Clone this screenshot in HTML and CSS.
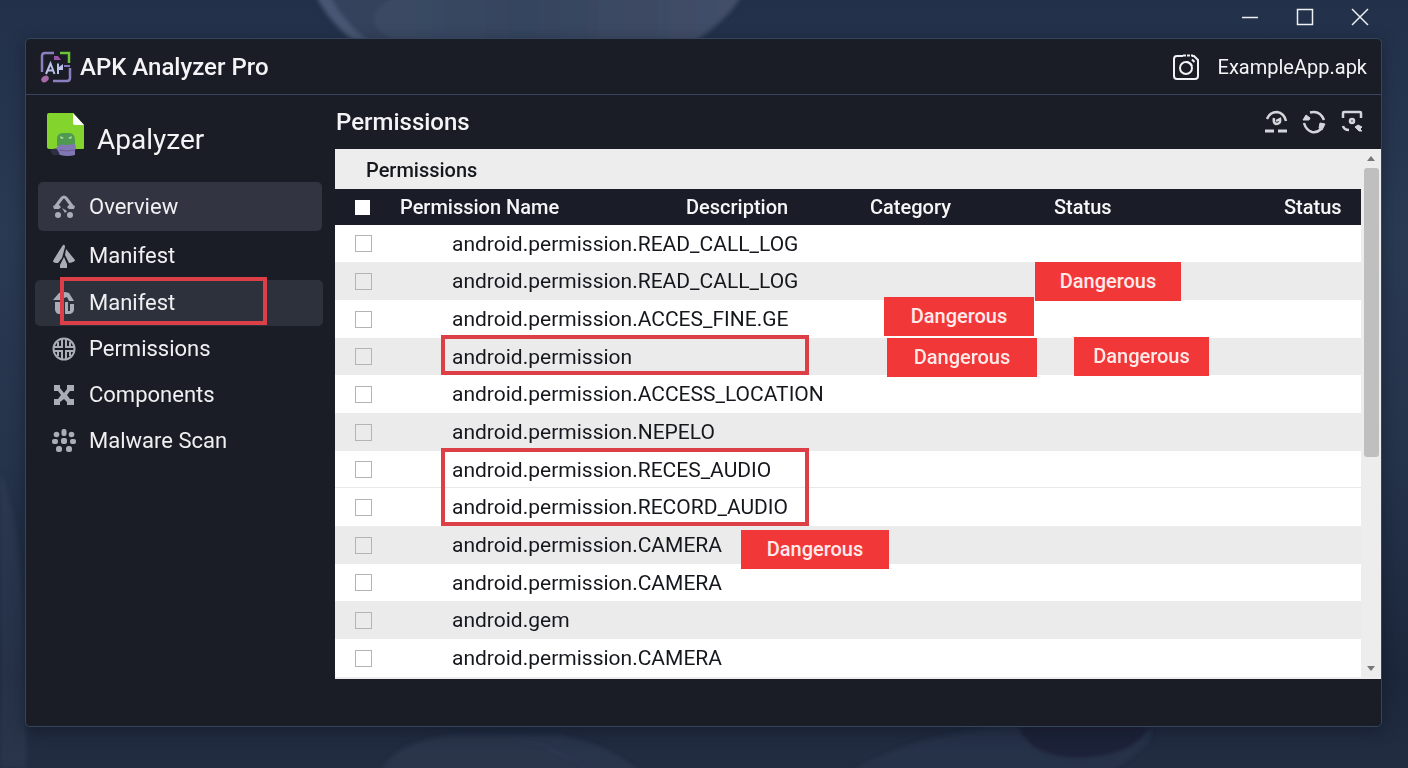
FILE: index.html
```
<!DOCTYPE html>
<html lang="en">
<head>
<meta charset="utf-8">
<meta name="viewport" content="width=device-width, initial-scale=1">
<title>APK Analyzer Pro</title>
<link rel="stylesheet" href="styles.css">
</head>
<body class="desktop">
<svg class="wallpaper" viewBox="0 0 1408 768" preserveAspectRatio="none" aria-hidden="true">
  <defs>
    <linearGradient id="base" x1="0" y1="0" x2="0" y2="1">
      <stop offset="0" stop-color="#22304a"/><stop offset="0.3" stop-color="#2a3a52"/>
      <stop offset="0.6" stop-color="#25334b"/><stop offset="0.88" stop-color="#1c273b"/><stop offset="1" stop-color="#232d42"/>
    </linearGradient>
    <linearGradient id="petal" x1="0" y1="0" x2="1" y2="0">
      <stop offset="0" stop-color="#3d4c67"/><stop offset="0.5" stop-color="#36445e"/><stop offset="1" stop-color="#434f69"/>
    </linearGradient>
    <filter id="soft"><feGaussianBlur stdDeviation="2"/></filter>
  </defs>
  <rect width="1408" height="768" fill="url(#base)"/>
  <path d="M0 470Q30 540 26 768H0Z" fill="#34425a" opacity=".4" filter="url(#soft)"/>
  <g filter="url(#soft)">
    <path d="M316 -4Q330 24 358 44H690Q724 24 742 -4Z" fill="url(#petal)"/>
    <path d="M316 -4Q330 24 358 44H372Q340 20 330 -4Z" fill="#5a6a86" opacity=".4"/>
    <path d="M330 -4Q350 30 372 44H400Q350 20 395 -4Z" fill="#2b3850" opacity=".4"/>
    <path d="M380 772Q400 735 470 735Q550 735 590 772Z" fill="#303c54" opacity=".5"/>
    <path d="M590 772Q540 740 490 735H560Q610 745 640 772Z" fill="#3a4760" opacity=".3"/>
    <path d="M850 772Q910 735 1000 728H1150Q1160 740 1110 772Z" fill="#2b3850" opacity=".5"/>
    <path d="M1018 726Q1030 758 1080 758Q1135 756 1150 726Z" fill="#1a2439"/>
  </g>
</svg>

<div class="caption-bar">
  <button class="caption-btn" aria-label="Minimize"><svg viewBox="0 0 18 18"><path d="M1 9.500H17"/></svg></button>
  <button class="caption-btn" aria-label="Maximize"><svg viewBox="0 0 18 18"><rect x="1.500" y="1.500" width="15" height="15"/></svg></button>
  <button class="caption-btn" aria-label="Close"><svg viewBox="0 0 18 18"><path d="M1 1L17 17M17 1L1 17"/></svg></button>
</div>

<div class="window">
  <header class="app-header">
    <svg class="app-logo" viewBox="0 0 32 32" fill="none" stroke-width="2.500" aria-hidden="true">
      <path d="M2 21V5Q2 2 5 2H14" stroke="#8c7fc0"/>
      <path d="M14 5V9H21L18 5Z" fill="#9a55a8"/>
      <path d="M20 2H29V12" stroke="#6cc43a"/>
      <path d="M30 17V27Q30 30 27 30H13" stroke="#8c7fc0"/>
      <path d="M24 15H30" stroke="#7f78bd" stroke-width="2"/>
      <ellipse cx="5" cy="28" rx="4" ry="3" transform="rotate(-35 5 28)" fill="#a86aa6"/>
      <path d="M6 23L10.500 12.500L14.500 23M8 19.500H13.500M18 23V12.500M18 18L22 15V18H19" stroke="#bdc0e8" stroke-width="2"/>
    </svg>
    <h1 class="app-title">APK Analyzer Pro</h1>
    <div class="open-file">
      <svg class="file-icon" viewBox="0 0 28 28" fill="none" stroke="#f2f2f4" stroke-width="2" aria-hidden="true">
        <path d="M11 3H5Q2 3 2 6V23Q2 26 5 26H23Q26 26 26 23V7L22 3H20"/>
        <path d="M11 2.500H21" stroke-dasharray="3 1"/>
        <circle cx="14" cy="15" r="6"/><path d="M14 9Q18 9 20 13M20 6.500L22.500 9"/>
      </svg>
      <span>ExampleApp.apk</span>
    </div>
  </header>

  <div class="app-body">
    <aside class="sidebar">
      <div class="brand">
        <svg class="brand-icon" viewBox="0 0 40 46" aria-hidden="true">
          <path d="M3 1H27L38 13V36Q38 37 37 37H3Q1 37 1 35V3Q1 1 3 1Z" fill="#83d52d"/>
          <path d="M27 1L38 13H29Q27 13 27 11Z" fill="#fff"/>
          <path d="M4 38Q10 35 14 38V43H7Z" fill="#2c3043"/>
          <path d="M11 34V27Q11 21 17 21H24Q29 22 29 28V34Z" fill="#4f9a50"/>
          <path d="M14 24L18 26L15 27ZM26 24L22 26L25 27Z" fill="#b3e3a6"/>
          <path d="M10 36Q14 31 20 33L29 32Q31 37 29 38V43Q22 45 14 43Q12 38 10 36Z" fill="#8177b4"/>
          <path d="M13 38Q21 40 29 38" stroke="#665d96" fill="none"/>
        </svg>
        <span class="brand-name">Apalyzer</span>
      </div>
      <nav class="nav">
        <a href="#" class="nav-item nav-item-top">
          <svg class="nav-icon" viewBox="0 0 24 24"><path d="M4 11L10 3Q12 1 14 3L20 11" fill="none" stroke="currentColor" stroke-width="3"/><path d="M1 11L6 9L9 12L7 14H2ZM23 11L18 9L15 12L17 14H22ZM10 13L15 16L13 18Z"/><circle cx="6" cy="20" r="3"/><circle cx="18" cy="20" r="3"/></svg>
          <span>Overview</span></a>
        <a href="#" class="nav-item nav-item-tall">
          <svg class="nav-icon" viewBox="0 0 24 24"><path d="M11 1Q13 0 13 3L10 14L6 19Q1 19 1 17Q5 10 11 1ZM14 5L23 16Q23 18 17 19L13 11ZM12 13L15 20V24H8V21Z"/></svg>
          <span>Manifest</span></a>
        <a href="#" class="nav-item nav-item-active" aria-current="page">
          <svg class="nav-icon" viewBox="0 0 24 24"><path d="M1 9L7 2Q12 0 17 2L22 10H17L15 6L9 8V9ZM3 11H11V23H7Q4 23 3 19ZM13 11H16V20H18V13H22V19Q21 23 17 23H13Z"/></svg>
          <span>Manifest</span></a>
        <a href="#" class="nav-item">
          <svg class="nav-icon" viewBox="0 0 24 24" fill="none" stroke="currentColor" stroke-width="2"><circle cx="12" cy="12" r="10.500"/><path d="M10 2V10H2M14 2V10H22M10 22V14H2M14 22V14H22M6 5V10M18 5V10M6 19V14M18 19V14"/></svg>
          <span>Permissions</span></a>
        <a href="#" class="nav-item">
          <svg class="nav-icon" viewBox="0 0 24 24"><path d="M2 2H8V5L12 10L15 6V2H22V8H18L15 12L18 16H22V22H15V19L12 16L8 19V22H2V16H6L9 12L6 8H2Z"/></svg>
          <span>Components</span></a>
        <a href="#" class="nav-item">
          <svg class="nav-icon" viewBox="0 0 24 24"><rect x="9.500" y="0" width="5" height="7" rx="2"/><rect x="9" y="9" width="6" height="6" rx="2"/><circle cx="4.500" cy="5.500" r="2.800"/><circle cx="19.500" cy="5.500" r="2.800"/><rect x="0" y="10" width="6" height="5" rx="2"/><rect x="18" y="10" width="6" height="5" rx="2"/><rect x="4" y="17" width="6" height="6" rx="2.500"/><rect x="14" y="17" width="6" height="6" rx="2.500"/></svg>
          <span>Malware Scan</span></a>
      </nav>
    </aside>

    <main class="main">
      <div class="page-head">
        <h2 class="page-title">Permissions</h2>
        <div class="tools">
          <button class="tool" aria-label="Scan"><svg viewBox="0 0 24 24"><path d="M3 9Q6 2 13 2Q20 3 22 11M10 8Q9 13 12 14Q17 14 16 9L12 11"/><path d="M1 21H10M14 21H23" stroke-width="3"/></svg></button>
          <button class="tool" aria-label="Refresh"><svg viewBox="0 0 24 24"><path d="M8 2.500Q18 0 22 10M2 13Q4 20 10 22Q15 23 19 19"/><path d="M1 10L4 5L8 8L7 10ZM18 13L23 14L20 20L17 18Z" fill="currentColor" stroke-width="1"/></svg></button>
          <button class="tool" aria-label="Capture"><svg viewBox="0 0 24 24"><path d="M3 8V3Q3 2 4 2H20Q21 2 21 3V8M3 16Q4 20 9 20"/><circle cx="12" cy="11" r="2"/><path d="M15 17L18 15L22 17L20 19L22 21H19Z" fill="currentColor" stroke-width="1"/></svg></button>
        </div>
      </div>

      <div class="panel">
        <div class="panel-content">
          <div class="tab-bar"><button class="tab">Permissions</button></div>
          <table class="perm-table">
            <colgroup><col class="col-check"><col class="col-name"><col class="col-mid"><col class="col-mid"><col class="col-status"><col></colgroup>
            <thead>
              <tr><th><input type="checkbox" class="check check-all" aria-label="Select all"></th><th>Permission Name</th><th>Description</th><th>Category</th><th>Status</th><th>Status</th></tr>
            </thead>
            <tbody>
              <tr><td><input type="checkbox" class="check" id="p1"></td><td class="name"><label for="p1">android.permission.READ_CALL_LOG</label></td><td></td><td></td><td></td><td></td></tr>
              <tr class="shade"><td><input type="checkbox" class="check" id="p2"></td><td class="name"><label for="p2">android.permission.READ_CALL_LOG</label></td><td></td><td></td><td><span class="badge badge-a">Dangerous</span></td><td></td></tr>
              <tr><td><input type="checkbox" class="check" id="p3"></td><td class="name"><label for="p3">android.permission.ACCES_FINE.GE</label></td><td></td><td><span class="badge badge-b">Dangerous</span></td><td></td><td></td></tr>
              <tr class="shade"><td><input type="checkbox" class="check" id="p4"></td><td class="name"><label for="p4">android.permission</label><span class="mark"></span></td><td></td><td><span class="badge badge-c">Dangerous</span></td><td><span class="badge badge-d">Dangerous</span></td><td></td></tr>
              <tr><td><input type="checkbox" class="check" id="p5"></td><td class="name"><label for="p5">android.permission.ACCESS_LOCATION</label></td><td></td><td></td><td></td><td></td></tr>
              <tr class="shade"><td><input type="checkbox" class="check" id="p6"></td><td class="name"><label for="p6">android.permission.NEPELO</label></td><td></td><td></td><td></td><td></td></tr>
              <tr class="ruled"><td><input type="checkbox" class="check" id="p7"></td><td class="name"><label for="p7">android.permission.RECES_AUDIO</label><span class="mark mark-double"></span></td><td></td><td></td><td></td><td></td></tr>
              <tr><td><input type="checkbox" class="check" id="p8"></td><td class="name"><label for="p8">android.permission.RECORD_AUDIO</label></td><td></td><td></td><td></td><td></td></tr>
              <tr class="shade"><td><input type="checkbox" class="check" id="p9"></td><td class="name"><label for="p9">android.permission.CAMERA</label></td><td><span class="badge badge-e">Dangerous</span></td><td></td><td></td><td></td></tr>
              <tr><td><input type="checkbox" class="check" id="p10"></td><td class="name"><label for="p10">android.permission.CAMERA</label></td><td></td><td></td><td></td><td></td></tr>
              <tr class="shade"><td><input type="checkbox" class="check" id="p11"></td><td class="name"><label for="p11">android.gem</label></td><td></td><td></td><td></td><td></td></tr>
              <tr><td><input type="checkbox" class="check" id="p12"></td><td class="name"><label for="p12">android.permission.CAMERA</label></td><td></td><td></td><td></td><td></td></tr>
            </tbody>
          </table>
        </div>
        <div class="scrollbar">
          <button class="scroll-btn" aria-label="Scroll up"><svg viewBox="0 0 10 6"><path d="M5 0L9 5H1Z"/></svg></button>
          <div class="scroll-track"><div class="scroll-thumb"></div></div>
          <button class="scroll-btn" aria-label="Scroll down"><svg viewBox="0 0 10 6"><path d="M5 6L9 1H1Z"/></svg></button>
        </div>
      </div>
    </main>
  </div>
</div>
</body>
</html>
```
FILE: styles.css
```
* { box-sizing: border-box; }

.desktop {
  margin: 0;
  min-height: 100vh;
  display: flex;
  flex-direction: column;
  position: relative;
  background: #222e45;
  color: #f4f4f6;
  font-family: Roboto, "Liberation Sans", sans-serif;
  font-size: 22px;
  line-height: 28px;
}

.wallpaper {
  position: absolute;
  inset: 0;
  width: 100%;
  height: 100%;
  z-index: -1;
}

button {
  border: 0;
  padding: 0;
  background: none;
  color: inherit;
  font: inherit;
}

.caption-bar {
  display: flex;
  justify-content: flex-end;
  align-items: center;
  gap: 37px;
  height: 38px;
  padding: 0 39px 4px 0;
}
.caption-btn { width: 18px; height: 18px; }
.caption-btn svg {
  display: block;
  fill: none;
  stroke: #eef0f4;
  stroke-width: 1.5;
}

.window {
  flex: 1;
  display: flex;
  flex-direction: column;
  margin: 0 26px 41px 25px;
  border: 1px solid #36445c;
  border-radius: 5px;
  background: #1a1d26;
  box-shadow: 0 4px 16px rgba(10, 16, 30, 0.4);
}

.app-header {
  display: flex;
  align-items: center;
  height: 56px;
  padding: 0 14px;
  border-bottom: 1px solid #36445c;
}
.app-logo { width: 32px; height: 32px; }
.app-title {
  margin: 0 auto 0 8px;
  font-size: 24px;
  font-weight: 500;
}
.open-file {
  display: flex;
  align-items: center;
  gap: 18px;
  font-size: 20px;
}
.file-icon { width: 28px; height: 28px; }

.app-body { flex: 1; display: flex; }

.sidebar { width: 309px; padding: 17px 12px 16px 9px; }
.brand {
  display: flex;
  gap: 11px;
  padding-left: 11px;
  margin-bottom: 24px;
}
.brand-icon { width: 40px; height: 46px; }
.brand-name { height: 46px; font-size: 28px; line-height: 56px; }

.nav { display: flex; flex-direction: column; }
.nav-item {
  display: flex;
  align-items: center;
  gap: 13px;
  height: 46px;
  padding-left: 17px;
  border-radius: 5px;
  color: #f0f0f2;
  text-decoration: none;
}
.nav-item-top {
  height: 49px;
  margin: 0 1px 0 3px;
  padding-left: 14px;
  background: #323541;
}
.nav-item-tall { height: 49px; }
.nav-item-active { position: relative; background: #2d313c; }
.nav-item-active::after {
  content: "";
  position: absolute;
  inset: -3px 56px 1px 25px;
  border: 4px solid #dc3f48;
}
.nav-icon {
  width: 24px;
  height: 24px;
  color: #a9adb8;
  fill: #a9adb8;
}
.nav-icon[fill="none"] { fill: none; }

.main { flex: 1; min-width: 0; padding-bottom: 47px; }
.page-head {
  display: flex;
  align-items: center;
  justify-content: space-between;
  height: 54px;
  padding: 0 17px 0 1px;
}
.page-title { margin: 0; font-size: 24px; font-weight: 500; }
.tools { display: flex; gap: 14px; }
.tool { width: 24px; height: 24px; color: #d4d5da; }
.tool svg {
  display: block;
  fill: none;
  stroke: currentColor;
  stroke-width: 2.5;
}

.panel {
  display: flex;
  padding-bottom: 2px;
  background: #ededee;
  color: #15171c;
}
.panel-content { flex: 1; min-width: 0; }
.tab-bar { height: 40px; padding: 7px 0 0 31px; }
.tab { font-size: 20px; font-weight: 500; }

.perm-table {
  width: 100%;
  table-layout: fixed;
  border-collapse: collapse;
  background: #fff;
  font-size: 21px;
}
.col-check { width: 65px; }
.col-name { width: 286px; }
.col-mid { width: 184px; }
.col-status { width: 230px; }

.perm-table th {
  height: 36px;
  padding: 0;
  background: #1a1d27;
  color: #f6f6f8;
  font-size: 20px;
  font-weight: 500;
  text-align: left;
}
.perm-table td { position: relative; height: 38px; padding: 0; }
.perm-table tr:nth-child(3n + 1) td { height: 37px; }
.perm-table .shade { background: #ebebec; }
.perm-table .ruled { box-shadow: inset 0 -1px #e8e8ea; }
.perm-table .name { padding-left: 52px; white-space: nowrap; }

.check {
  appearance: none;
  display: block;
  width: 17px;
  height: 17px;
  margin: 0 0 0 20px;
  border: 1px solid #b4b4b6;
}
.check-all {
  width: 15px;
  height: 15px;
  border: 0;
  background: #fff;
}

.badge {
  position: absolute;
  z-index: 1;
  top: 0;
  width: 150px;
  height: 39px;
  background: #f23739;
  color: #ffeaea;
  font-size: 20px;
  font-weight: 500;
  line-height: 38px;
  text-align: center;
}
.badge-a { left: -19px; width: 146px; }
.badge-b { left: 14px; top: -3px; }
.badge-c { left: 17px; }
.badge-d { left: 20px; top: -1px; width: 135px; }
.badge-e { left: 55px; top: 4px; width: 148px; }

.mark {
  position: absolute;
  inset: -3px -123px 0 41px;
  border: 4px solid #dc3f45;
}
.mark-double { inset: -3px -123px -38px 41px; }

.scrollbar {
  display: flex;
  flex-direction: column;
  width: 20px;
}
.scroll-btn { height: 19px; }
.scroll-btn svg { display: block; width: 10px; height: 6px; margin: 0 auto; fill: #77787b; }
.scroll-track { flex: 1; padding: 0 2px 0 3px; }
.scroll-thumb { height: 59%; border-radius: 3px; background: #bfbfc0; }
```
